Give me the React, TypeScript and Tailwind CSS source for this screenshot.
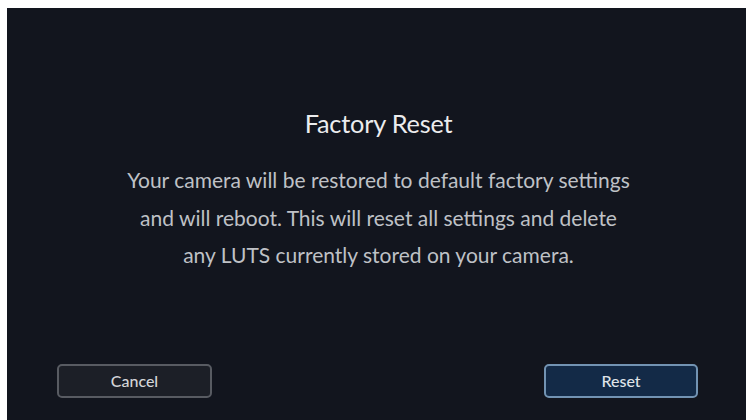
import React from "react";

export default function App() {
  return (
    <div className="w-[746px] h-[420px] bg-white pt-[8px] pl-[7px] overflow-hidden" style={{ fontFamily: "Lato, 'Noto Sans', sans-serif" }}>
      <div className="w-full h-full bg-[#12151e] flex flex-col">
        <div className="h-[100px]" />
        <div className="flex flex-col items-center pl-[4px]">
          <h1 className="text-[25.3px] leading-[30px] text-[#ececee] tracking-[-0.2px]">Factory Reset</h1>
          <div className="mt-[23px] flex flex-col items-center text-[21px] leading-[37.5px] text-[#bfc1c6]">
            <p>Your camera will be restored to default factory settings</p>
            <p>and will reboot. This will reset all settings and delete</p>
            <p>any LUTS currently stored on your camera.</p>
          </div>
        </div>
        <div className="flex-1" />
        <div className="flex justify-between pl-[50px] pr-[48px] pb-[22px]">
          <button className="w-[155px] h-[34px] rounded-[5px] border-2 border-[#585b62] bg-[#1c1f27] text-[16px] font-medium text-[#d4d5d8]">Cancel</button>
          <button className="w-[154px] h-[34px] rounded-[5px] border-2 border-[#7293b3] bg-[#132a47] text-[16px] font-medium text-[#dfe3e8]">Reset</button>
        </div>
      </div>
    </div>
  );
}
